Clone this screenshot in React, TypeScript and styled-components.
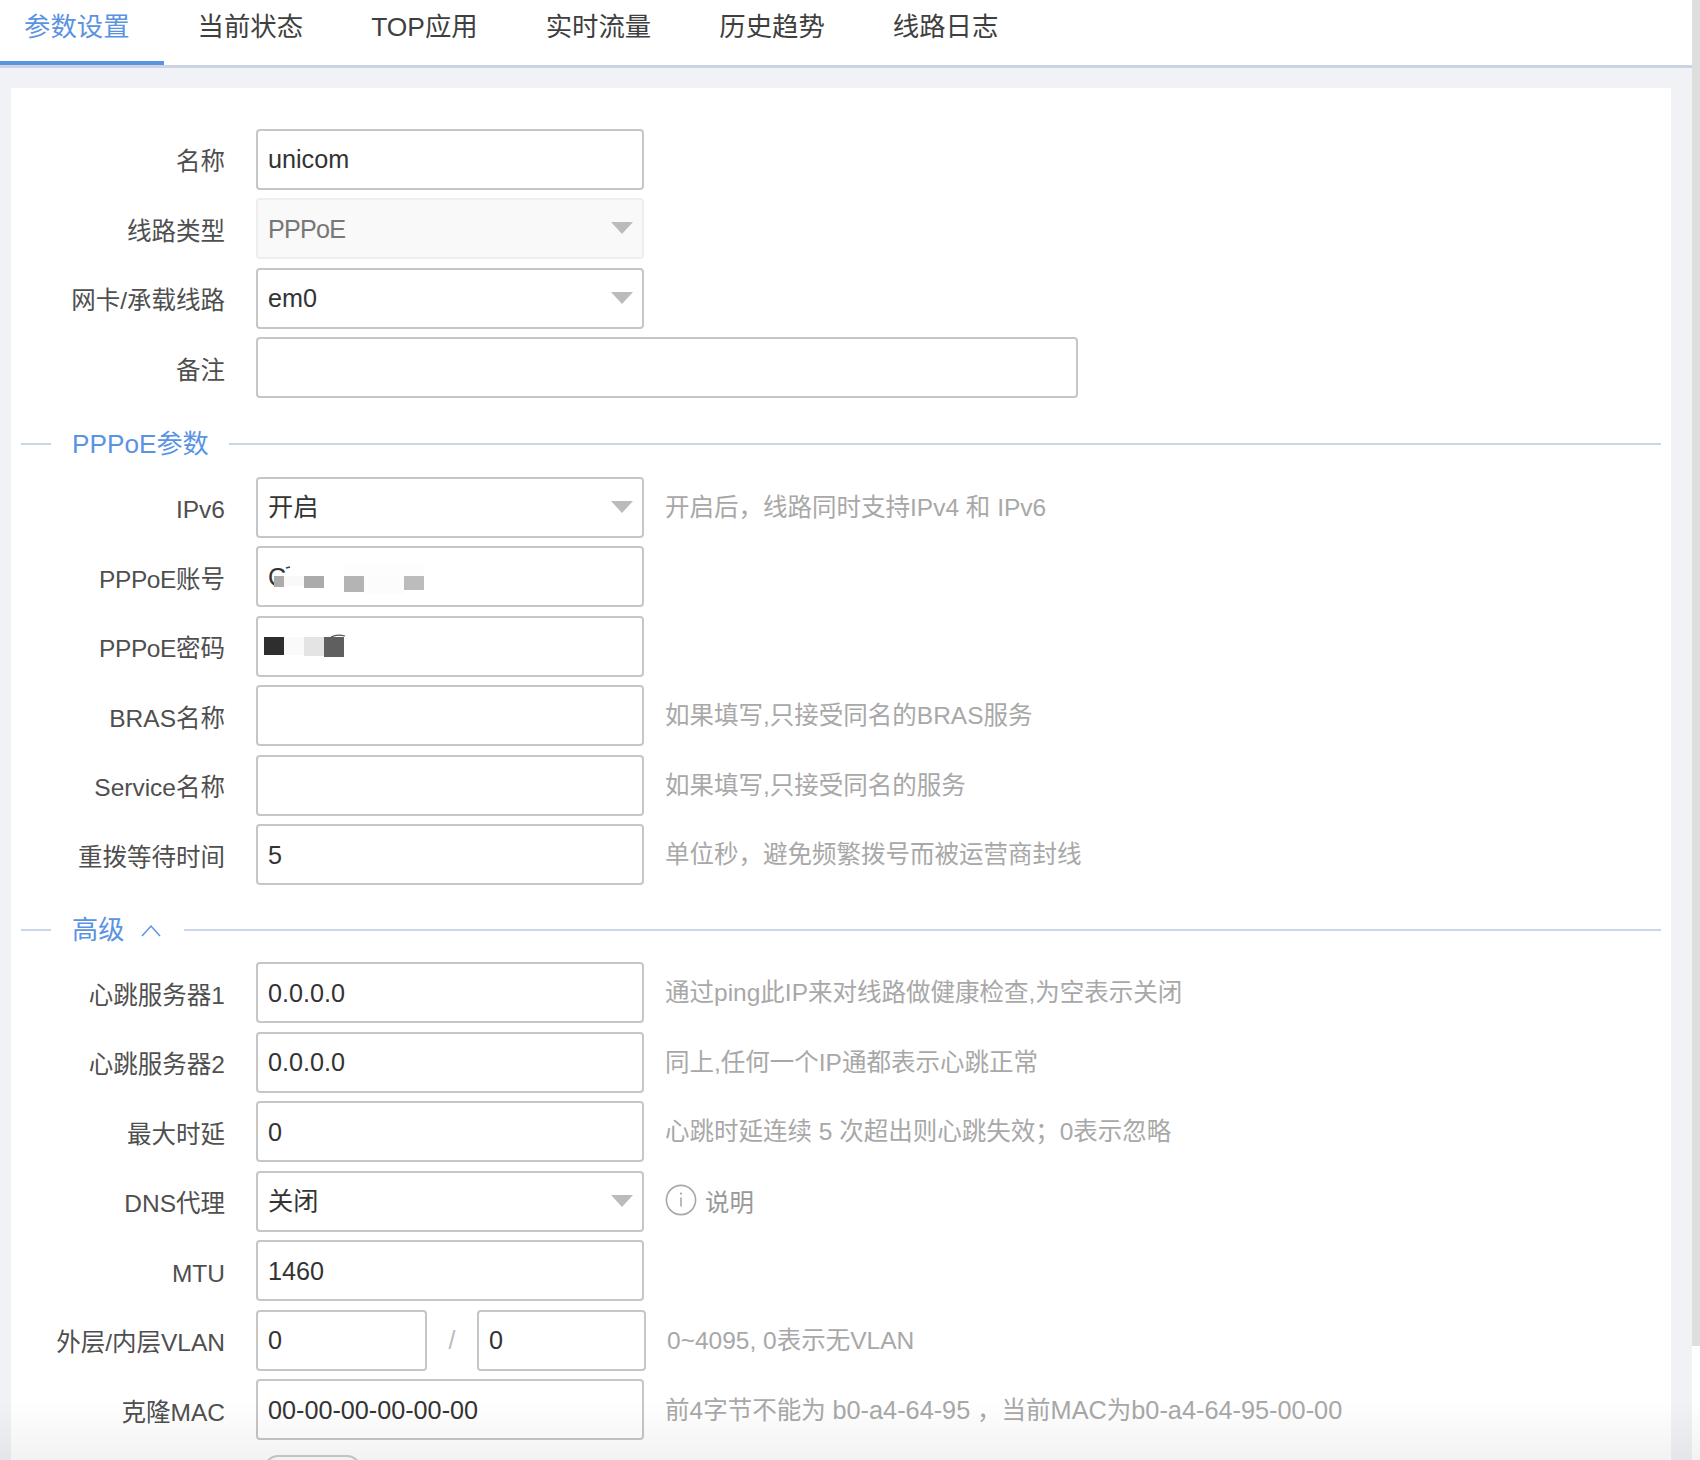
import styled, { createGlobalStyle } from 'styled-components';

const tabs = ['参数设置', '当前状态', 'TOP应用', '实时流量', '历史趋势', '线路日志'];

const GlobalStyle = createGlobalStyle`
  html, body {
    margin: 0;
    width: 1700px;
    height: 1460px;
    overflow: hidden;
    background: #fff;
  }
  * {
    box-sizing: border-box;
  }
  body {
    font-family: "Liberation Sans", "Noto Sans CJK SC", sans-serif;
  }
`;

const AccountMask = () => (
  <MaskSvg width="180" height="60" viewBox="0 0 180 60">
    <rect x="27" y="30" width="20" height="10" fill="#f9f9f9" />
    <rect x="87" y="19" width="80" height="11" fill="#fdfdfd" />
    <rect x="107" y="30" width="40" height="18" fill="#fcfcfc" />
    <rect x="17" y="30" width="10" height="11" fill="#ababab" />
    <rect x="47" y="30" width="20" height="12" fill="#ababab" />
    <rect x="87" y="30" width="20" height="16" fill="#b4b4b4" />
    <rect x="147" y="30" width="20" height="14" fill="#bcbcbc" />
    <path d="M29 22 L33 21" stroke="#444" strokeWidth="1.5" fill="none" />
  </MaskSvg>
);

const PasswordMask = () => (
  <MaskSvg width="180" height="60" viewBox="0 0 180 60">
    <rect x="7" y="21" width="20" height="18" fill="#2e2e2e" />
    <rect x="27" y="21" width="20" height="18" fill="#fafafa" />
    <rect x="47" y="21" width="20" height="19" fill="#e4e4e4" />
    <rect x="67" y="21" width="20" height="20" fill="#5f5f5f" />
    <path d="M74 21 Q80 18 88 20" stroke="#555" strokeWidth="1.2" fill="none" />
  </MaskSvg>
);

const InfoIcon = () => (
  <svg width="32" height="32" viewBox="0 0 32 32" fill="none">
    <circle cx="16" cy="16" r="14.6" stroke="#a8a8a8" strokeWidth="1.6" />
    <circle cx="16" cy="9.6" r="1.1" fill="#a8a8a8" />
    <path d="M16 13.5V22.5" stroke="#a8a8a8" strokeWidth="1.6" />
  </svg>
);

const ChevronUp = () => (
  <Chevron width="20" height="13" viewBox="0 0 20 13" fill="none">
    <path d="M1 12L10 2L19 12" stroke="#5b93e3" strokeWidth="1.5" />
  </Chevron>
);

export default function App() {
  return (
    <>
      <GlobalStyle />
      <Page>
        <Main>
          <TabBar>
            {tabs.map((tab, i) => (
              <Tab key={tab} $active={i === 0}>
                {tab}
              </Tab>
            ))}
          </TabBar>
          <Content>
            <Panel>
              <Row>
                <Label>名称</Label>
                <Field>unicom</Field>
              </Row>
              <Row>
                <Label>线路类型</Label>
                <Select $disabled>PPPoE</Select>
              </Row>
              <Row>
                <Label>网卡/承载线路</Label>
                <Select>em0</Select>
              </Row>
              <Row>
                <Label>备注</Label>
                <Field $width={822} />
              </Row>

              <Section>
                <SectionTitle>PPPoE参数</SectionTitle>
                <SectionLine />
              </Section>
              <Row>
                <Label>IPv6</Label>
                <Select>开启</Select>
                <Hint>开启后，线路同时支持IPv4 和 IPv6</Hint>
              </Row>
              <Row>
                <Label>
                  <TightRun>PPPoE</TightRun>账号
                </Label>
                <Field>
                  C
                  <AccountMask />
                </Field>
              </Row>
              <Row>
                <Label>
                  <TightRun>PPPoE</TightRun>密码
                </Label>
                <Field>
                  <PasswordMask />
                </Field>
              </Row>
              <Row>
                <Label>BRAS名称</Label>
                <Field />
                <Hint>如果填写,只接受同名的BRAS服务</Hint>
              </Row>
              <Row>
                <Label>Service名称</Label>
                <Field />
                <Hint>如果填写,只接受同名的服务</Hint>
              </Row>
              <Row>
                <Label>重拨等待时间</Label>
                <Field>5</Field>
                <Hint>单位秒，避免频繁拨号而被运营商封线</Hint>
              </Row>

              <Section $tight>
                <SectionTitle>高级</SectionTitle>
                <ChevronUp />
                <SectionLine />
              </Section>
              <Row>
                <Label>心跳服务器1</Label>
                <Field>0.0.0.0</Field>
                <Hint>通过ping此IP来对线路做健康检查,为空表示关闭</Hint>
              </Row>
              <Row>
                <Label>心跳服务器2</Label>
                <Field>0.0.0.0</Field>
                <Hint>同上,任何一个IP通都表示心跳正常</Hint>
              </Row>
              <Row>
                <Label>最大时延</Label>
                <Field>0</Field>
                <Hint>心跳时延连续 5 次超出则心跳失效；0表示忽略</Hint>
              </Row>
              <Row>
                <Label>DNS代理</Label>
                <Select>关闭</Select>
                <HelpLink>
                  <InfoIcon />
                  说明
                </HelpLink>
              </Row>
              <Row>
                <Label>MTU</Label>
                <Field>1460</Field>
              </Row>
              <Row>
                <Label>外层/内层VLAN</Label>
                <Field $width={171}>0</Field>
                <Slash>/</Slash>
                <Field $width={169}>0</Field>
                <Hint>0~4095, 0表示无VLAN</Hint>
              </Row>
              <Row>
                <Label>克隆MAC</Label>
                <Field>00-00-00-00-00-00</Field>
                <Hint>
                  前4字节不能为 <WideRun>b0-a4-64-95</WideRun> ，当前<WideRun>MAC</WideRun>为<WideRun>b0-a4-64-95-00-00</WideRun>
                </Hint>
              </Row>
              <SubmitButton />
            </Panel>
          </Content>
        </Main>
        <Scrollbar />
        <BottomFade />
      </Page>
    </>
  );
}

const Page = styled.div`
  position: relative;
  display: flex;
  align-items: flex-start;
  width: 1700px;
  height: 1460px;
  overflow: hidden;
`;

const Main = styled.div`
  display: flex;
  flex-direction: column;
  width: 1692px;
  height: 1460px;
`;

const TabBar = styled.div`
  display: flex;
  flex: none;
  height: 68px;
  background: #fff;
  border-bottom: 3px solid #ccd4e4;
`;

const Tab = styled.div<{ $active?: boolean }>`
  height: 65px;
  padding: 0 34px 11px;
  font-size: 26.4px;
  line-height: 54px;
  white-space: nowrap;
  color: ${(p) => (p.$active ? '#5b93e3' : '#3f3f3f')};
  border-bottom: 4px solid ${(p) => (p.$active ? '#5b93e3' : 'transparent')};
  &:first-child {
    padding-left: 24px;
  }
`;

const Content = styled.div`
  flex: 1;
  min-height: 0;
  padding: 20px 21px 0 11px;
  background: #f0f2f6;
`;

const Panel = styled.div`
  height: 100%;
  padding-top: 40.7px;
  overflow: hidden;
  background: #fff;
`;

const Row = styled.div`
  display: flex;
  align-items: center;
  height: 61px;
  margin-bottom: 8.5px;
`;

const Label = styled.div`
  flex: none;
  width: 214px;
  margin-right: 31px;
  padding-top: 6px;
  font-size: 24.5px;
  line-height: 32px;
  text-align: right;
  white-space: nowrap;
  color: #4f4f4f;
`;

const TightRun = styled.span`
  letter-spacing: -0.4px;
`;

const Field = styled.div<{ $width?: number }>`
  position: relative;
  display: flex;
  align-items: center;
  flex: none;
  width: ${(p) => p.$width ?? 388}px;
  height: 61px;
  padding: 0 10px;
  font-size: 25.2px;
  line-height: 30px;
  color: #333;
  background: #fff;
  border: 2px solid #c6c6c6;
  border-radius: 4px;
`;

const Select = styled(Field)<{ $disabled?: boolean }>`
  letter-spacing: ${(p) => (p.$disabled ? '-0.8px' : '0')};
  color: ${(p) => (p.$disabled ? '#777' : '#333')};
  background: ${(p) => (p.$disabled ? '#f9f9f9' : '#fff')};
  border-color: ${(p) => (p.$disabled ? '#eee' : '#c6c6c6')};
  &::after {
    content: '';
    position: absolute;
    top: 22px;
    right: 9px;
    border-top: 12px solid #bbb;
    border-left: 11.5px solid transparent;
    border-right: 11.5px solid transparent;
  }
`;

const MaskSvg = styled.svg`
  position: absolute;
  top: -2px;
  left: -1px;
`;

const Hint = styled.div`
  margin-left: 21px;
  padding-top: 1px;
  font-size: 24.5px;
  line-height: 30px;
  white-space: nowrap;
  color: #a8a8a8;
`;

const WideRun = styled.span`
  font-size: 25.3px;
`;

const HelpLink = styled.div`
  display: flex;
  align-items: center;
  gap: 8px;
  margin-left: 21px;
  padding-top: 4px;
  font-size: 24.4px;
  line-height: 30px;
  color: #999;
  svg {
    margin-top: -7px;
  }
`;

const Slash = styled.div`
  flex: none;
  width: 50px;
  font-size: 25px;
  text-align: center;
  color: #bbb;
`;

const Section = styled.div<{ $tight?: boolean }>`
  display: flex;
  align-items: center;
  height: ${(p) => (p.$tight ? 68.5 : 70)}px;
  margin: 0 10px;
  padding-top: 5px;
  &::before {
    content: '';
    flex: none;
    width: 30px;
    height: 2px;
    margin-right: 21px;
    background: #ccd6ea;
  }
`;

const SectionTitle = styled.div`
  flex: none;
  margin-right: 20px;
  font-size: 26.2px;
  line-height: 32px;
  white-space: nowrap;
  color: #5b93e3;
`;

const SectionLine = styled.div`
  flex: 1;
  height: 2px;
  background: #ccd6ea;
`;

const Chevron = styled.svg`
  flex: none;
  margin: 0 23px 0 -3px;
`;

const SubmitButton = styled.div`
  width: 97px;
  height: 60px;
  margin: 15px 0 0 253px;
  background: #fff;
  border: 2px solid #ccc;
  border-radius: 14px;
`;

const Scrollbar = styled.div`
  flex: none;
  width: 8px;
  height: 1346px;
  background: #dedede;
`;

const BottomFade = styled.div`
  position: absolute;
  left: 0;
  right: 0;
  bottom: 0;
  height: 60px;
  pointer-events: none;
  background: linear-gradient(to bottom, rgba(0, 0, 0, 0), rgba(0, 0, 0, 0.05));
`;
